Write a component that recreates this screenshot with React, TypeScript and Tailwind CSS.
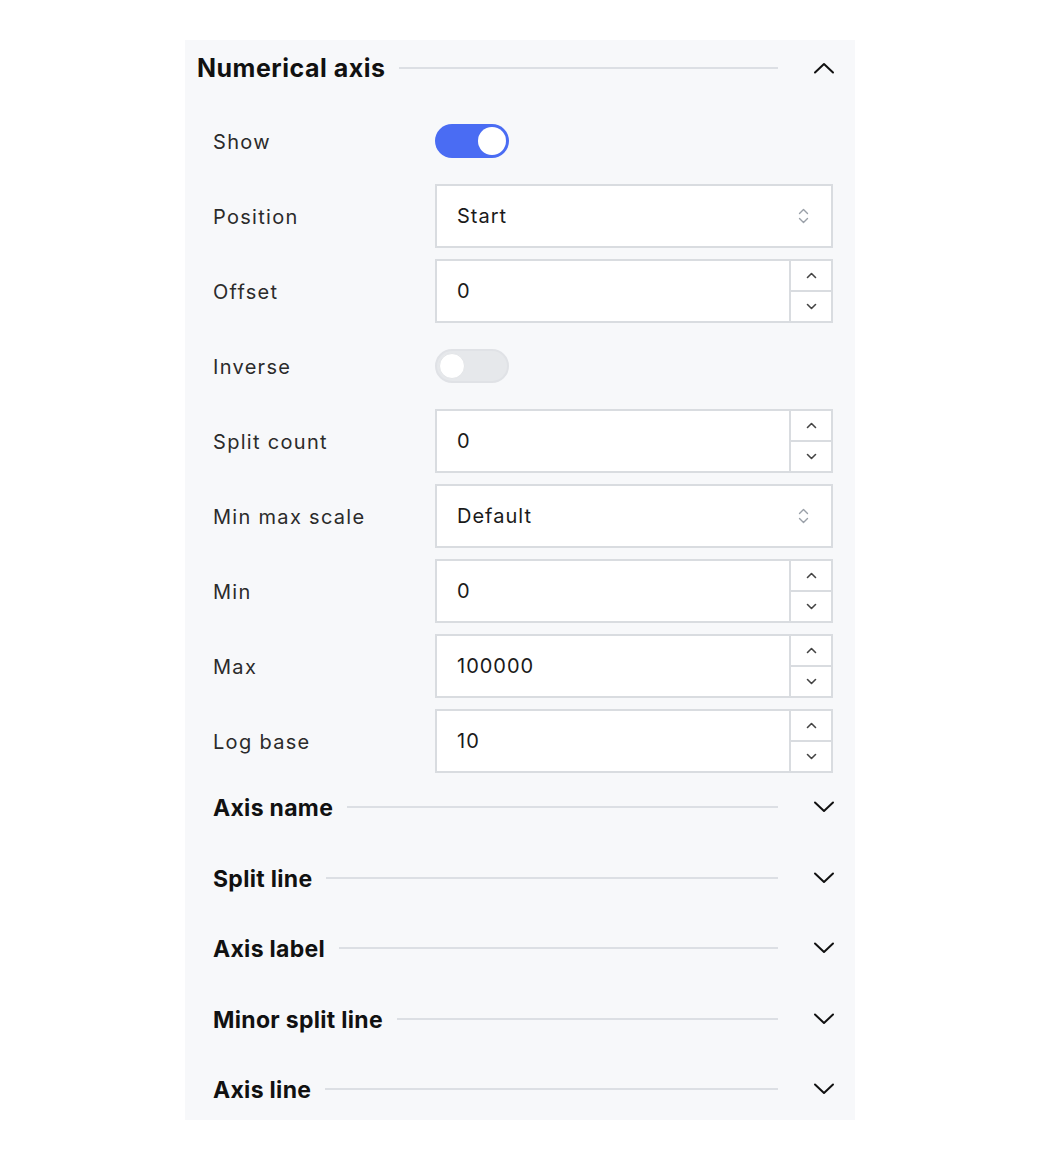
import React from "react";

const FONT = { fontFamily: "Inter, 'Noto Sans', sans-serif" };

function BigChevron({ up }: { up?: boolean }) {
  return (
    <svg width="22" height="12" viewBox="0 0 22 12" fill="none" className="shrink-0">
      <path
        d={up ? "M2 10.5 L11 2 L20 10.5" : "M2 1.5 L11 10 L20 1.5"}
        stroke="#111"
        strokeWidth="2"
        strokeLinecap="round"
        strokeLinejoin="round"
      />
    </svg>
  );
}

function SmallChevron({ up }: { up?: boolean }) {
  return (
    <svg width="11" height="7" viewBox="0 0 11 7" fill="none">
      <path
        d={up ? "M1.5 5.5 L5.5 1.5 L9.5 5.5" : "M1.5 1.5 L5.5 5.5 L9.5 1.5"}
        stroke="#444"
        strokeWidth="1.6"
        strokeLinecap="round"
        strokeLinejoin="round"
      />
    </svg>
  );
}

function SelectIcon() {
  return (
    <svg width="11" height="16" viewBox="0 0 11 16" fill="none">
      <path d="M1.5 5.5 L5.5 1.5 L9.5 5.5" stroke="#9aa0a8" strokeWidth="1.4" strokeLinecap="round" strokeLinejoin="round" />
      <path d="M1.5 10.5 L5.5 14.5 L9.5 10.5" stroke="#9aa0a8" strokeWidth="1.4" strokeLinecap="round" strokeLinejoin="round" />
    </svg>
  );
}

function Toggle({ on }: { on: boolean }) {
  return on ? (
    <div className="w-[74px] h-[34px] rounded-full bg-[#4a6cf3] flex items-center justify-end pr-[3px]">
      <div className="w-[28px] h-[28px] rounded-full bg-white" />
    </div>
  ) : (
    <div className="w-[74px] h-[34px] rounded-full bg-[#e6e8eb] border-2 border-[#e0e2e6] flex items-center pl-[2px]">
      <div className="w-[26px] h-[26px] rounded-full bg-white border border-[#e3e5e8]" />
    </div>
  );
}

function Select({ value }: { value: string }) {
  return (
    <div className="w-[398px] h-[64px] bg-white border-2 border-[#d9dce0] flex items-center pl-[20px] pr-[22px]">
      <span className="flex-1 text-[20px] tracking-[1px] text-[#1a1a1a] pt-[1px]">{value}</span>
      <SelectIcon />
    </div>
  );
}

function NumberInput({ value }: { value: string }) {
  return (
    <div className="w-[398px] h-[64px] bg-white border-2 border-[#d9dce0] flex">
      <div className="flex-1 flex items-center pl-[20px] text-[20px] tracking-[1px] text-[#1a1a1a] pt-[1px]">{value}</div>
      <div className="w-[42px] border-l-2 border-[#d9dce0] flex flex-col">
        <div className="flex-1 flex items-center justify-center border-b-2 border-[#d9dce0]">
          <SmallChevron up />
        </div>
        <div className="flex-1 flex items-center justify-center">
          <SmallChevron />
        </div>
      </div>
    </div>
  );
}

function Row({ label, children }: { label: string; children: React.ReactNode }) {
  return (
    <div className="h-[63px] shrink-0 flex items-center">
      <div className="w-[222px] text-[20px] tracking-[1.3px] text-[#2b2b2b] pt-[2px]">{label}</div>
      {children}
    </div>
  );
}

function SubSection({ title }: { title: string }) {
  return (
    <div className="h-[70.5px] shrink-0 flex items-center pl-[28px] pr-[20px]">
      <span className="text-[23px] font-bold text-[#111] tracking-[0.3px] pt-[2px]">{title}</span>
      <div className="flex-1 h-[2px] bg-[#dcdfe4] ml-[14px] mr-[35px]" />
      <BigChevron />
    </div>
  );
}

export default function App() {
  return (
    <div className="min-h-screen bg-white flex justify-center pt-[40px]" style={FONT}>
      <div className="w-[670px] h-[1080px] bg-[#f7f8fa] overflow-hidden flex flex-col">
        <div className="h-[56px] shrink-0 flex items-center pl-[12px] pr-[20px]">
          <span className="text-[25px] font-bold text-[#111] tracking-[0.5px] pt-[2px]">Numerical axis</span>
          <div className="flex-1 h-[2px] bg-[#dcdfe4] ml-[14px] mr-[35px]" />
          <BigChevron up />
        </div>
        <div className="mt-[13px] shrink-0 pl-[28px] flex flex-col gap-[12px]">
          <Row label="Show">
            <Toggle on />
          </Row>
          <Row label="Position">
            <Select value="Start" />
          </Row>
          <Row label="Offset">
            <NumberInput value="0" />
          </Row>
          <Row label="Inverse">
            <Toggle on={false} />
          </Row>
          <Row label="Split count">
            <NumberInput value="0" />
          </Row>
          <Row label="Min max scale">
            <Select value="Default" />
          </Row>
          <Row label="Min">
            <NumberInput value="0" />
          </Row>
          <Row label="Max">
            <NumberInput value="100000" />
          </Row>
          <Row label="Log base">
            <NumberInput value="10" />
          </Row>
        </div>
        <div className="shrink-0 flex flex-col">
          <SubSection title="Axis name" />
          <SubSection title="Split line" />
          <SubSection title="Axis label" />
          <SubSection title="Minor split line" />
          <SubSection title="Axis line" />
        </div>
      </div>
    </div>
  );
}
